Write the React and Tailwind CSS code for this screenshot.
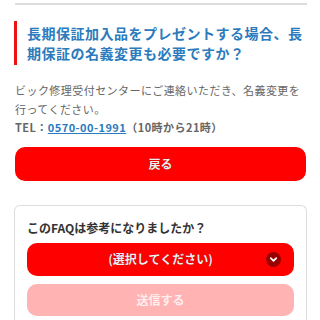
import React from 'react';

export default function App() {
  return (
    <div
      className="w-[320px] h-[320px] overflow-hidden bg-white px-[15px]"
      style={{ fontFamily: '"Noto Sans CJK JP", "Noto Sans", sans-serif' }}
    >
      {/* divider */}
      <div className="h-[2px] bg-[#dddddd] mt-[3px] mr-[-2px]" />

      {/* question heading */}
      <div className="mt-[16px] ml-[-1px] border-l-[3px] border-[#ee1111] pl-[10px] py-[2px]">
        <h2 className="text-[14px] leading-[20px] font-bold tracking-[0.5px] text-[#2b7bbd]">
          長期保証加入品をプレゼントする場合、長期保証の名義変更も必要ですか？
        </h2>
      </div>

      {/* answer */}
      <div className="mt-[16px] text-[11px] leading-[18.5px] tracking-[0.45px] text-[#666666]">
        <p>ビック修理受付センターにご連絡いただき、名義変更を行ってください。</p>
        <p className="font-bold">
          TEL：<span className="text-[#2b7bbd] underline">0570-00-1991</span>（10時から21時）
        </p>
      </div>

      <button className="mt-[10px] w-[291px] h-[34px] rounded-[10px] bg-[#ff0000] text-[12px] font-bold text-[#eeeeee] [text-shadow:0_0_1px_rgba(0,0,0,0.5)]">
        戻る
      </button>

      {/* feedback card */}
      <div className="mt-[24px] ml-[-1px] w-[293px] rounded-t-[6px] border border-b-0 border-[#dddddd] px-[12px] pt-[14px] h-[140px]">
        <p className="text-[12px] leading-[16px] font-bold text-[#333333]">このFAQは参考になりましたか？</p>
        <div className="mt-[7px] relative h-[33px] rounded-[10px] bg-[#ff0000] flex items-center justify-center text-[12px] font-bold text-[#eeeeee] [text-shadow:0_0_1px_rgba(0,0,0,0.5)]">
          (選択してください)
          <span className="absolute right-[13px] top-[9px] w-[15px] h-[15px] rounded-full bg-[#990000] flex items-center justify-center">
            <svg width="9" height="9" viewBox="0 0 10 10">
              <path d="M2 3.5 L5 6.5 L8 3.5" fill="none" stroke="#ffffff" strokeWidth="2" strokeLinecap="round" strokeLinejoin="round" />
            </svg>
          </span>
        </div>
        <div className="mt-[8px] h-[32px] rounded-[10px] bg-[#ffb3b3] flex items-center justify-center text-[12px] font-bold text-[#ffeeee]">
          送信する
        </div>
      </div>
    </div>
  );
}
